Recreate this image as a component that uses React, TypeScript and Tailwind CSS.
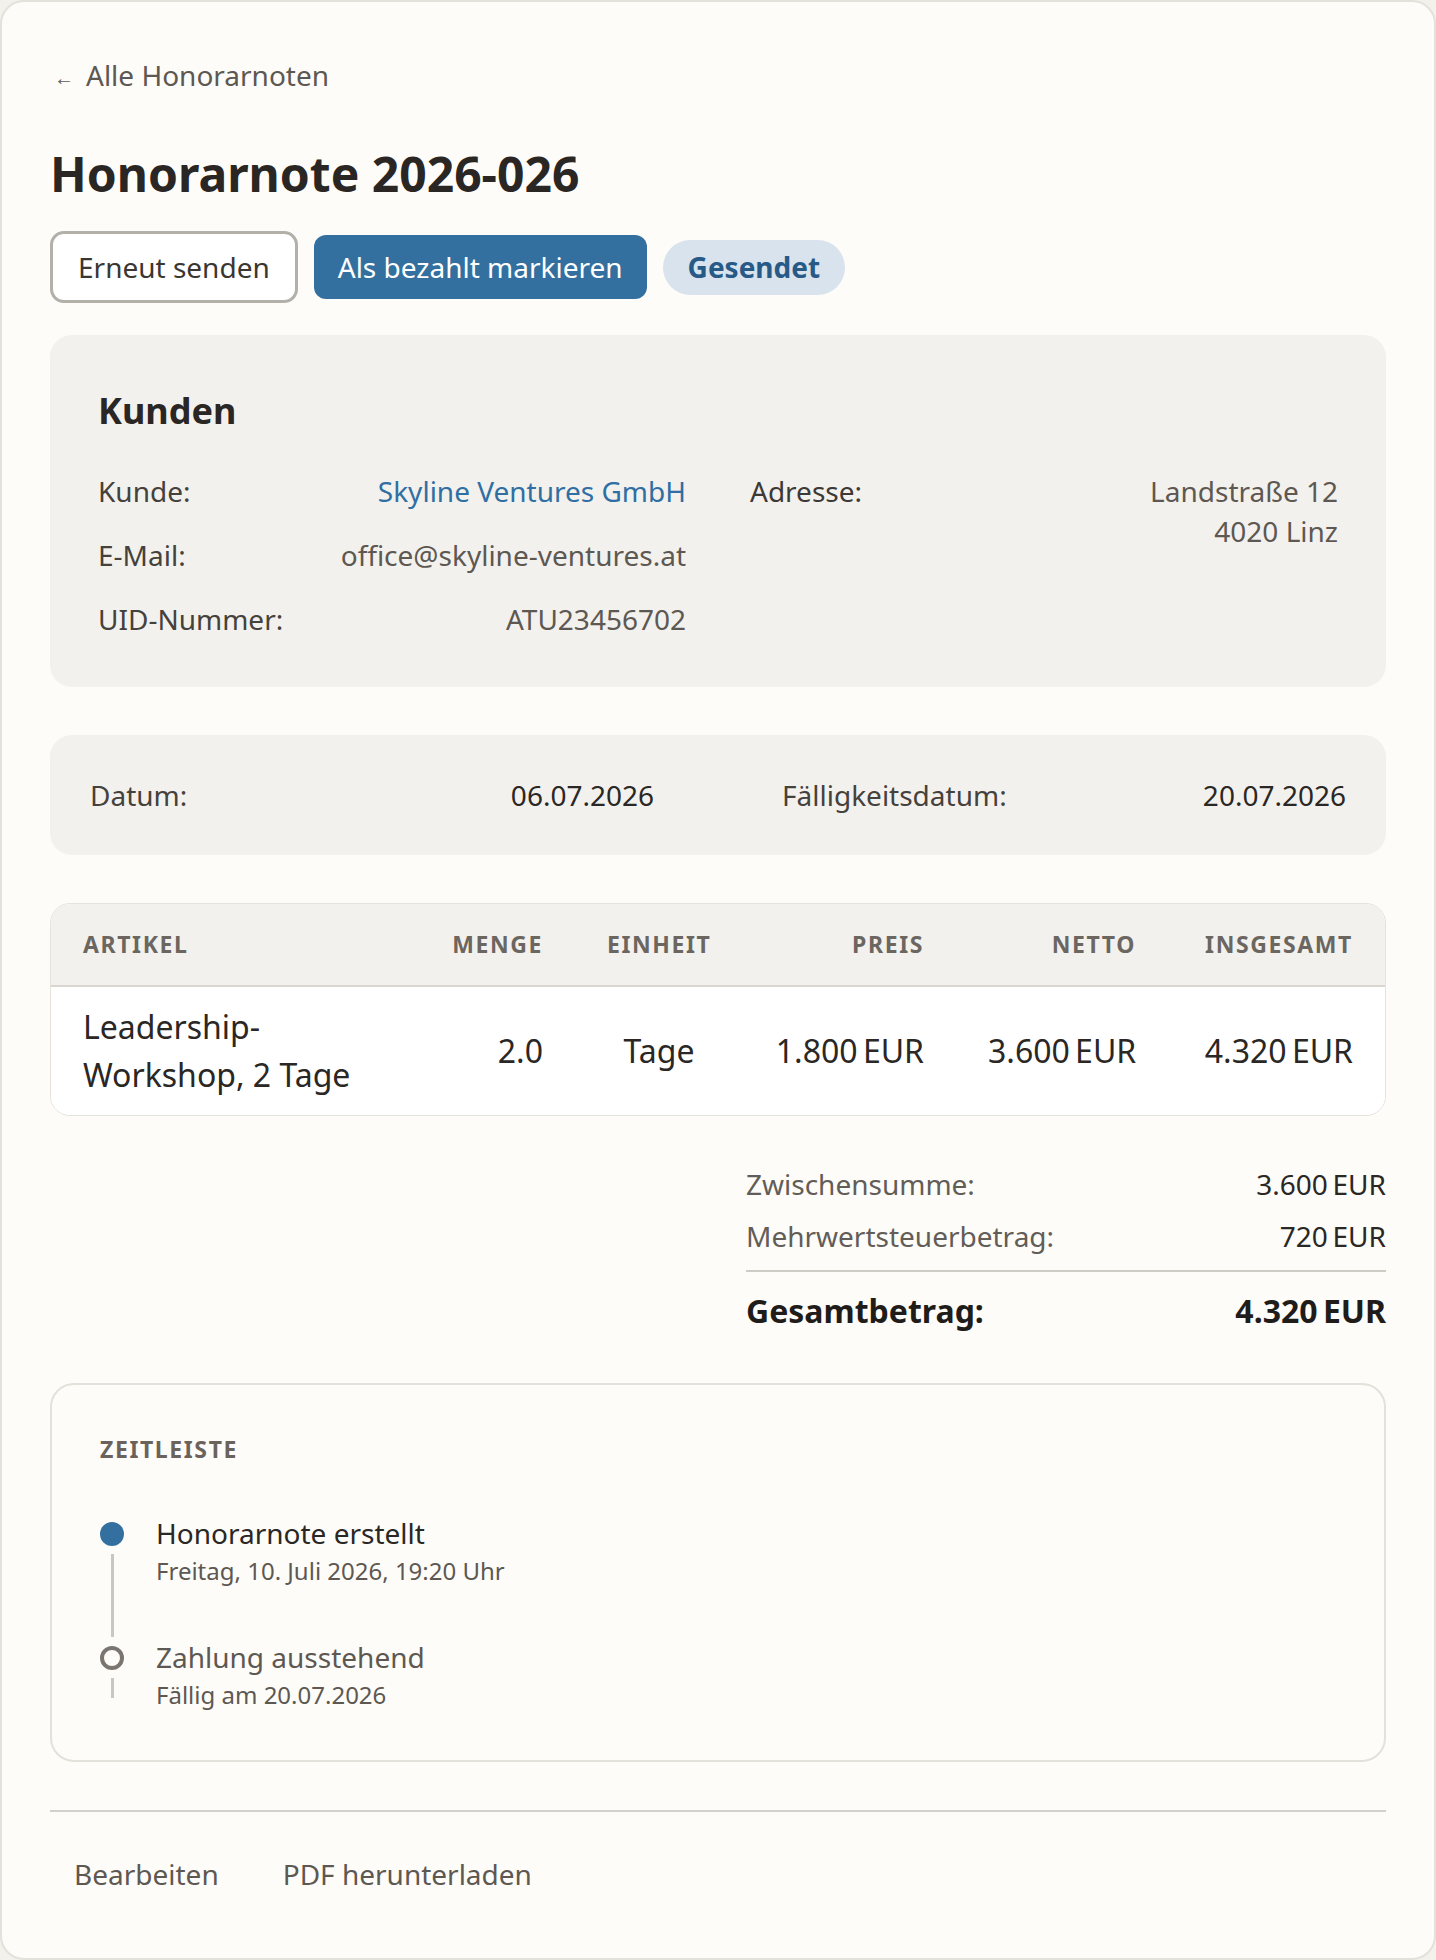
import type { ReactElement } from 'react';

/*
 * Honorarnote detail — header actions, customer block, dates, line items,
 * totals, timeline and footer actions.
 */

const NB = '\u202F';

const COLS = 'grid grid-cols-[369px_155px_168px_213px_212px_1fr]';

function InfoRow({ label, children }: { label: string; children: React.ReactNode }): ReactElement {
  return (
    <div className="flex items-start justify-between text-[28px] leading-[40px]">
      <span className="text-[#45413c]">{label}</span>
      <span className="text-right text-[#5d5852]">{children}</span>
    </div>
  );
}

export default function App(): ReactElement {
  return (
    <div className="bg-[#f3f1ec] font-['Noto_Sans','Open_Sans',sans-serif]">
      <div className="min-h-[1960px] rounded-[24px] border-2 border-[#e4e1db] bg-[#fdfcf9] px-12 pt-[53px] pb-[52px]">
        {/* Back link */}
        <a className="flex items-center text-[28px] leading-[40px] text-[#5d5852]">
          <span className="mr-[12px] ml-[4px] translate-y-[3px] text-[20px]">←</span>
          Alle Honorarnoten
        </a>

        <h1 className="mt-[50px] text-[48px] font-bold leading-[58px] text-[#2a2623]">Honorarnote 2026-026</h1>

        {/* Actions */}
        <div className="mt-[28px] flex items-center gap-4">
          <button className="h-[72px] rounded-[14px] border-[3px] border-[#b3afa9] bg-white px-[25px] text-[28px] leading-[40px] text-[#3a3632]">
            Erneut senden
          </button>
          <button className="h-[64px] rounded-[12px] bg-[#33709f] px-6 text-[28px] leading-[40px] text-white">
            Als bezahlt markieren
          </button>
          <span className="flex h-[55px] items-center rounded-full bg-[#d8e3ee] px-[25px] text-[28px] font-bold text-[#275a87]">
            Gesendet
          </span>
        </div>

        {/* Kunden */}
        <section className="mt-[32px] rounded-[22px] bg-[#f3f1ed] px-12 pt-[54px] pb-12">
          <h2 className="text-[36px] font-bold leading-[44px] text-[#2a2623]">Kunden</h2>
          <div className="mt-[38px] grid grid-cols-2 gap-x-16">
            <div className="flex flex-col gap-6">
              <InfoRow label="Kunde:">
                <span className="text-[#2f6fa3]">Skyline Ventures GmbH</span>
              </InfoRow>
              <InfoRow label="E-Mail:">office@skyline-ventures.at</InfoRow>
              <InfoRow label="UID-Nummer:">ATU23456702</InfoRow>
            </div>
            <div>
              <div className="flex items-start justify-between text-[28px] leading-[40px]">
                <span className="text-[#3d3935]">Adresse:</span>
                <span className="text-right text-[#5d5852]">
                  Landstraße 12
                  <br />
                  4020 Linz
                </span>
              </div>
            </div>
          </div>
        </section>

        {/* Dates */}
        <section className="mt-12 grid grid-cols-2 gap-x-32 rounded-[22px] bg-[#f3f1ed] p-10 text-[28px] leading-[40px]">
          <div className="flex justify-between">
            <span className="text-[#45413c]">Datum:</span>
            <span className="text-[#2a2724]">06.07.2026</span>
          </div>
          <div className="flex justify-between">
            <span className="text-[#45413c]">Fälligkeitsdatum:</span>
            <span className="text-[#2a2724]">20.07.2026</span>
          </div>
        </section>

        {/* Line items */}
        <div className="mt-12 overflow-hidden rounded-[20px] border border-[#e6e3dd]">
          <div
            className={`${COLS} h-[83px] items-center border-b-2 border-[#d9d6d0] bg-[#f3f1ed] text-[23px] font-bold uppercase tracking-[0.07em] text-[#6b665f]`}
          >
            <span className="px-8">Artikel</span>
            <span className="px-8 text-right">Menge</span>
            <span className="px-8 text-center">Einheit</span>
            <span className="px-8 text-right">Preis</span>
            <span className="px-8 text-right">Netto</span>
            <span className="px-8 text-right">Insgesamt</span>
          </div>
          <div className={`${COLS} items-center bg-white py-4 text-[32px] leading-[48px] text-[#2a2724]`}>
            <span className="px-8">Leadership-Workshop, 2 Tage</span>
            <span className="px-8 text-right">2.0</span>
            <span className="px-8 text-center">Tage</span>
            <span className="px-8 text-right">1.800{NB}EUR</span>
            <span className="px-8 text-right">3.600{NB}EUR</span>
            <span className="px-8 text-right">4.320{NB}EUR</span>
          </div>
        </div>

        {/* Totals */}
        <div className="mt-12 ml-auto w-[640px]">
          <div className="flex flex-col gap-3 text-[28px] leading-[40px]">
            <div className="flex justify-between">
              <span className="text-[#625d57]">Zwischensumme:</span>
              <span className="text-[#2a2724]">3.600{NB}EUR</span>
            </div>
            <div className="flex justify-between">
              <span className="text-[#625d57]">Mehrwertsteuerbetrag:</span>
              <span className="text-[#2a2724]">720{NB}EUR</span>
            </div>
          </div>
          <div className="mt-[14px] flex justify-between border-t-2 border-[#cfccc6] pt-[15px] text-[32px] font-bold leading-[48px] text-[#1f1c19]">
            <span>Gesamtbetrag:</span>
            <span>4.320{NB}EUR</span>
          </div>
        </div>

        {/* Timeline */}
        <section className="mt-12 rounded-[24px] border-2 border-[#e4e1db] bg-[#fdfcf9] px-12 pt-12 pb-[47px]">
          <h3 className="text-[23px] font-bold uppercase leading-[33px] tracking-[0.07em] text-[#6b635b]">Zeitleiste</h3>
          <div className="mt-[47px]">
            <div className="flex gap-8">
              <div className="flex w-6 flex-col items-center">
                <span className="mt-[9px] size-6 rounded-full bg-[#33709f]" />
                <span className="mt-2 w-[3px] flex-1 bg-[#cac7c1]" />
              </div>
              <div className="pb-[48px]">
                <p className="text-[28px] leading-[40px] text-[#2a2724]">Honorarnote erstellt</p>
                <p className="text-[24px] leading-[36px] text-[#5d5852]">Freitag, 10. Juli 2026, 19:20 Uhr</p>
              </div>
            </div>
            <div className="flex gap-8">
              <div className="flex w-6 flex-col items-center">
                <span className="mt-[9px] size-6 rounded-full border-4 border-[#7a756f]" />
                <span className="mt-2 h-5 w-[3px] bg-[#cac7c1]" />
              </div>
              <div>
                <p className="text-[28px] leading-[40px] text-[#5d5852]">Zahlung ausstehend</p>
                <p className="text-[24px] leading-[36px] text-[#5d5852]">Fällig am 20.07.2026</p>
              </div>
            </div>
          </div>
        </section>

        {/* Footer actions */}
        <div className="mt-12 flex gap-4 border-t-2 border-[#d4d1cb] pt-[41px]">
          <button className="px-6 text-[28px] leading-[42px] text-[#5d5852]">Bearbeiten</button>
          <button className="px-6 text-[28px] leading-[42px] text-[#5d5852]">PDF herunterladen</button>
        </div>
      </div>
    </div>
  );
}
